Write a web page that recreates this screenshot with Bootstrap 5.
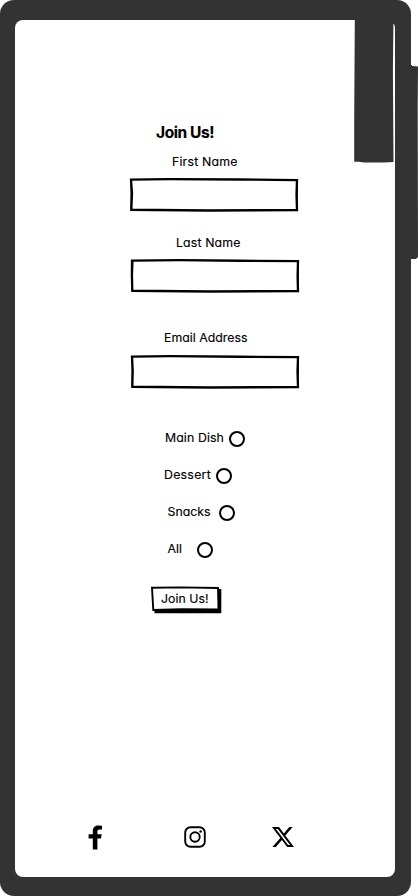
<!DOCTYPE html>
<html lang="en">
<head>
<meta charset="utf-8">
<meta name="viewport" content="width=device-width, initial-scale=1">
<title>Join Us!</title>
<link href="https://cdn.jsdelivr.net/npm/bootstrap@5.3.0/dist/css/bootstrap.min.css" rel="stylesheet">
<style>
body{font-family:Inter,"Open Sans",sans-serif;font-feature-settings:"cv11" 1;font-size:12.3px;line-height:20px;color:#000;width:418px;height:896px}
.phone{width:411px;height:896px;padding:20px 16px 19px 15px;background:#333;border-radius:14px}
.screen{border-radius:8px}
.side-key{left:408px;top:65px;width:10px;height:194px}
.corner-tab{left:339px;top:0;width:41px;height:143px}
.signup{padding-top:102px}
.signup-title{font-size:15.5px;line-height:22px;font-weight:700;margin-left:141px;width:58px}
.fit{display:block;white-space:nowrap;-webkit-text-stroke:.15px #000}
.first{margin:8px 0 0 157px}
.last{margin:21px 0 0 161px}
.mail{margin:35px 0 0 149px}
.sketch{display:grid;width:170px;height:35px;margin:5px 0 0 114px}
.sketch.shifted{margin-left:115px}
.mail+.sketch{margin-top:6px}
.sketch>*{grid-area:1/1;width:100%;height:100%;min-width:0}
.sketch input{border:0;background:none;padding:0 8px;outline:0}
.options{padding-top:39px}
.option{height:37px}
.option input{appearance:none;width:16px;height:16px;border:2px solid #000;border-radius:50%;margin:3px 0 0;flex:none}
.sketch.submit{width:71px;height:28px;margin:10px 0 0 136px}
.submit button{border:0;background:none;padding:0 0 3px 10px;color:#000;line-height:20px;text-align:left}
.social{height:26px;padding-left:73px;margin-bottom:27px}
.social svg{display:block}
.social .insta{margin-left:81px}
.social .xlogo{margin-left:66px}
</style>
<script src="https://cdn.jsdelivr.net/npm/bootstrap@5.3.0/dist/js/bootstrap.bundle.min.js"></script>
</head>
<body class="bg-white position-relative overflow-hidden m-0">
<svg class="side-key position-absolute" viewBox="0 0 10 194"><path d="M0 0H4V1L10 1.5L9.7 40L10 192L8 194H0Z" fill="#333"/></svg>
<div class="phone">
<main class="screen bg-white h-100 position-relative d-flex flex-column">
<svg class="corner-tab position-absolute" viewBox="0 0 41 143"><path d="M0.8 0H41V5.5Q40.8 3.5 39.4 3.5L38.9 50L39.5 142L30 142.6L10 142.5L5 141.8H0.2L0.2 100Z" fill="#333"/></svg>
<form class="signup flex-grow-1" onsubmit="return false">
<h1 class="signup-title mb-0"><span class="fit" data-w="57">Join Us!</span></h1>
<label class="fit first" for="f1" data-w="64.5">First Name</label>
<div class="sketch"><svg viewBox="0 0 170 34" preserveAspectRatio="none"><path d="M2 2.6L40 2.1L110 2.4L168 3L167.5 17L168 32.2L80 32.5L2.3 31.8L3 16Z" fill="none" stroke="#000" stroke-width="2.3"/><path d="M2 3L2 15L2 31M168.4 4L168.4 18L167.5 32" fill="none" stroke="#000"/></svg><input id="f1" type="text"></div>
<label class="fit last" for="f2" data-w="63.5">Last Name</label>
<div class="sketch shifted"><svg viewBox="0 0 170 34" preserveAspectRatio="none"><path d="M2 2.6L50 2.1L110 2.7L168 3L167.6 18L168 32.2L80 32.5L2.3 31.8L1.9 16Z" fill="none" stroke="#000" stroke-width="2.3"/><path d="M3 3L2.6 15L2 31M168.4 4L168.4 18L167.5 32" fill="none" stroke="#000"/></svg><input id="f2" type="text"></div>
<label class="fit mail" for="f3" data-w="82.5">Email Address</label>
<div class="sketch shifted"><svg viewBox="0 0 170 34" preserveAspectRatio="none"><path d="M2 2.6L40 2.1L110 2.7L168 3L167.5 17L168 32.2L80 32.5L2.3 31.8L2.7 16Z" fill="none" stroke="#000" stroke-width="2.3"/><path d="M2 3L2.2 15L2 31M168.4 4L168.5 18L167.5 32" fill="none" stroke="#000"/></svg><input id="f3" type="text"></div>
<div class="options">
<div class="option d-flex align-items-start"><label class="fit" for="r1" data-x="150" data-w="58" data-gap="6">Main Dish</label><input id="r1" name="dish" type="radio"></div>
<div class="option d-flex align-items-start"><label class="fit" for="r2" data-x="149" data-w="46" data-gap="6">Dessert</label><input id="r2" name="dish" type="radio"></div>
<div class="option d-flex align-items-start"><label class="fit" for="r3" data-x="152.5" data-w="42" data-gap="9.5">Snacks</label><input id="r3" name="dish" type="radio"></div>
<div class="option d-flex align-items-start"><label class="fit" for="r4" data-x="152.5" data-w="13.5" data-gap="16">All</label><input id="r4" name="dish" type="radio"></div>
</div>
<div class="sketch submit"><svg viewBox="0 0 71 28"><path d="M67 3H70.3V27.2H3.5V23H67Z"/><path d="M1 1.8L30 1.4L67 2L67.5 23.5L30 23.2L2.3 24Z" fill="#fff" stroke="#000" stroke-width="1.9"/></svg><button type="submit"><span class="fit" data-w="46.5">Join Us!</span></button></div>
</form>
<footer class="social d-flex align-items-center">
<svg width="15" height="25" viewBox="0 0 15 25"><path d="M4.8 24.5V13.5H.6V9.3H4.8V6.2C4.8 2.4 7 .5 10.5.5Q12.5.5 14 .8V4.5H11.8C9.8 4.5 9.4 5.4 9.4 6.8V9.3H13.7L13 13.5H9.4V24.5Z"/></svg>
<svg class="insta" width="22" height="22" viewBox="0 0 22 22" fill="none" stroke="#000" stroke-width="1.9"><rect x="1.2" y="1.2" width="19.6" height="19.6" rx="5.3"/><circle cx="11" cy="11" r="4.7"/><circle cx="16.6" cy="5.4" r="1.25" fill="#000" stroke="none"/></svg>
<svg class="xlogo" width="22" height="20" viewBox="0 0 22 20"><path d="M17.3 0H20.7L13.3 8.5L22 20H15.2L9.9 13L3.8 20H.4L8.3 10.9L0 0H7L11.8 6.4ZM16.1 18H18L5.9 1.9H3.9Z"/></svg>
</footer>
</main>
</div>
<script>
// Spread each caption over its column width.
document.querySelectorAll('.fit').forEach(function(e){
  var r=document.createRange();r.selectNodeContents(e);
  var w=r.getBoundingClientRect().width,t=+e.dataset.w+1;
  e.style.letterSpacing=((t-w)/e.textContent.length)+'px';
  if(e.dataset.x){e.style.marginLeft=e.dataset.x+'px';e.style.width=e.dataset.w+'px';e.style.marginRight=e.dataset.gap+'px'}
});
</script>
</body>
</html>
